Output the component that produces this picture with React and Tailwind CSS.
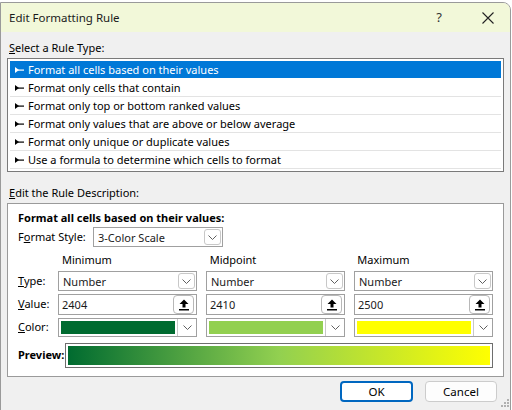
import React from 'react';

const font = { fontFamily: '"Noto Sans", "Open Sans", sans-serif' };

function Bullet({ light }) {
  return (
    <svg width="9" height="6" viewBox="0 0 9 6" className="mr-[4px] shrink-0">
      <polygon points="0,0 4,3 0,6" fill={light ? '#fff' : '#000'} />
      <rect x="3" y="2.5" width="6" height="1.2" fill={light ? '#fff' : '#000'} />
    </svg>
  );
}

function Chevron() {
  return (
    <svg width="9" height="5" viewBox="0 0 9 5">
      <path d="M0.5 0.5 L4.5 4.5 L8.5 0.5" stroke="#606060" fill="none" strokeWidth="1" />
    </svg>
  );
}

function Combo({ value, width = 'w-[139px]' }) {
  return (
    <div className={`${width} h-[20px] border border-[#a0a0a0] bg-white flex items-center pl-[4px] pr-[1px]`}>
      <span className="flex-1 leading-none text-[#1a1a1a]">{value}</span>
      <div className="w-[17px] h-[16px] border border-[#c8c8c8] rounded-[3px] flex items-center justify-center">
        <Chevron />
      </div>
    </div>
  );
}

function ValueBox({ value }) {
  return (
    <div className="w-[139px] h-[21px] border border-[#a0a0a0] bg-white flex items-center pl-[3px] pr-[2px]">
      <span className="flex-1 leading-none text-[#1a1a1a]">{value}</span>
      <div className="w-[21px] h-[19px] border border-[#b8b8b8] rounded-[4px] bg-white flex items-center justify-center">
        <svg width="10" height="12" viewBox="0 0 10 12">
          <path d="M5 0.5 L9.5 5 L6.5 5 L6.5 8.5 L3.5 8.5 L3.5 5 L0.5 5 Z" fill="#000" />
          <rect x="0" y="10" width="10" height="1.5" fill="#000" />
        </svg>
      </div>
    </div>
  );
}

function ColorBox({ color }) {
  return (
    <div className="w-[139px] h-[19px] border border-[#a0a0a0] bg-white flex items-stretch">
      <div className="flex-1 m-[2px]" style={{ backgroundColor: color }} />
      <div className="w-[19px] border-l border-[#c8c8c8] flex items-center justify-center">
        <Chevron />
      </div>
    </div>
  );
}

const rules = [
  'Format all cells based on their values',
  'Format only cells that contain',
  'Format only top or bottom ranked values',
  'Format only values that are above or below average',
  'Format only unique or duplicate values',
  'Use a formula to determine which cells to format',
];

export default function App() {
  return (
    <div className="w-[512px] h-[410px] bg-white overflow-hidden text-[11px] text-black" style={font}>
      <div className="relative mt-[2px] w-[511px] h-[410px] border border-[#9a9a9a] rounded-tr-[8px] overflow-hidden bg-[#f0f0f0] flex flex-col">
        <div className="h-[29px] bg-[#f2f8d9] flex items-center pl-[8px] shrink-0">
          <span className="flex-1 text-[11.5px] text-[#1a1a1a]">Edit Formatting Rule</span>
          <span className="w-[20px] text-[13px] text-[#333] mr-[33px] text-center">?</span>
          <svg width="12" height="12" viewBox="0 0 12 12" className="mr-[16px]">
            <path d="M0.5 0.5 L11.5 11.5 M11.5 0.5 L0.5 11.5" stroke="#222" strokeWidth="1.1" />
          </svg>
        </div>

        <div className="px-[6px] flex flex-col">
          <div className="h-[26px] flex items-end pb-[2px] pl-[2px]">
            <span><span className="underline">S</span>elect a Rule Type:</span>
          </div>
          <div className="h-[114px] border border-[#7a7a7a] bg-white p-[2px] flex flex-col">
            {rules.map((r, i) => (
              <div
                key={r}
                className={
                  i === 0
                    ? 'h-[17px] bg-[#0078d7] text-white flex items-center pl-[5px] mb-[1px]'
                    : 'h-[18px] border-b border-[#e3e3e3] flex items-center pl-[5px]'
                }
              >
                <Bullet light={i === 0} />
                <span className="leading-none">{r}</span>
              </div>
            ))}
          </div>

          <div className="h-[31px] flex items-end pb-[2px] pl-[2px]">
            <span><span className="underline">E</span>dit the Rule Description:</span>
          </div>
          <div className="h-[174px] border border-[#9a9a9a] bg-white pl-[10px] pr-[10px] flex flex-col">
            <div className="h-[22px] flex items-end font-bold">Format all cells based on their values:</div>
            <div className="flex items-center mt-[1px]">
              <span className="w-[75px]">F<span className="underline">o</span>rmat Style:</span>
              <Combo value="3-Color Scale" width="w-[130px]" />
            </div>
            <div className="flex pl-[42px] gap-[10px] h-[24px] items-end pb-[3px]">
              <span className="w-[138px] pl-[2px]">Minimum</span>
              <span className="w-[138px] pl-[2px]">Midpoint</span>
              <span className="w-[138px] pl-[2px]">Maximum</span>
            </div>
            <div className="flex items-center">
              <span className="w-[42px]"><span className="underline">T</span>ype:</span>
              <div className="flex gap-[9px]">
                <Combo value="Number" />
                <Combo value="Number" />
                <Combo value="Number" />
              </div>
            </div>
            <div className="flex items-center mt-[3px]">
              <span className="w-[42px]"><span className="underline">V</span>alue:</span>
              <div className="flex gap-[9px]">
                <ValueBox value="2404" />
                <ValueBox value="2410" />
                <ValueBox value="2500" />
              </div>
            </div>
            <div className="flex items-center mt-[3px]">
              <span className="w-[42px]"><span className="underline">C</span>olor:</span>
              <div className="flex gap-[9px]">
                <ColorBox color="#006b30" />
                <ColorBox color="#92d050" />
                <ColorBox color="#ffff00" />
              </div>
            </div>
            <div className="flex items-center mt-[6px]">
              <span className="w-[47px] font-bold">Preview:</span>
              <div className="w-[430px] h-[25px] border border-[#6e6e6e] p-[2px] bg-white">
                <div className="w-full h-full bg-[linear-gradient(to_right,#006b30,#92d050_50%,#ffff00)]" />
              </div>
            </div>
          </div>

          <div className="flex justify-end gap-[12px] mt-[4px] pr-[7px]">
            <button className="w-[73px] h-[21px] border-2 border-[#0067c0] rounded-[4px] bg-white text-[11.5px] leading-none">OK</button>
            <button className="w-[72px] h-[21px] border border-[#cccccc] rounded-[4px] bg-[#fdfdfd] text-[11.5px] leading-none">Cancel</button>
          </div>
        </div>

        {/* resize grip */}
        <svg width="10" height="10" viewBox="0 0 10 10" className="absolute right-[1px] top-[396px]">
          {[[8, 0], [8, 3], [8, 6], [5, 3], [5, 6], [2, 6]].map(([x, y]) => (
            <rect key={`${x}-${y}`} x={x} y={y} width="2" height="2" fill="#b0b0b0" />
          ))}
        </svg>
      </div>
    </div>
  );
}
